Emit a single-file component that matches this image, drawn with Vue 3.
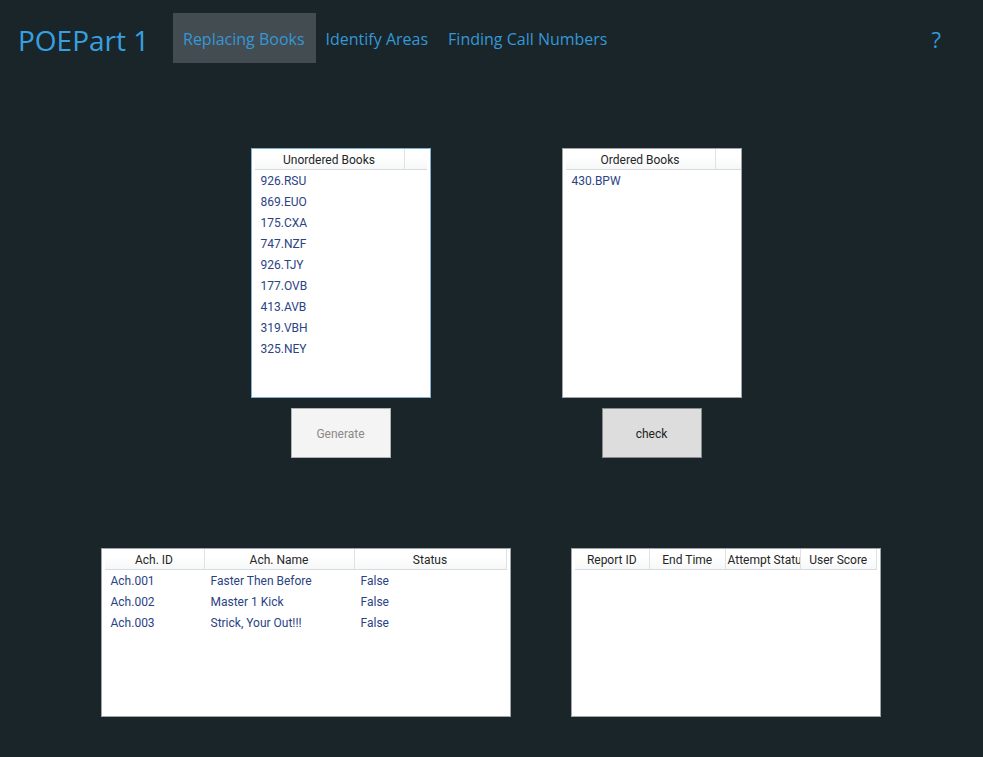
<script setup>
import { ref } from 'vue'

const tabs = ['Replacing Books', 'Identify Areas', 'Finding Call Numbers']
const activeTab = ref(tabs[0])

const unordered = [
  '926.RSU', '869.EUO', '175.CXA', '747.NZF', '926.TJY',
  '177.OVB', '413.AVB', '319.VBH', '325.NEY',
]
const ordered = ['430.BPW']

const achievements = [
  { id: 'Ach.001', name: 'Faster Then Before', status: 'False' },
  { id: 'Ach.002', name: 'Master 1 Kick', status: 'False' },
  { id: 'Ach.003', name: 'Strick, Your Out!!!', status: 'False' },
]
const reportColumns = ['Report ID', 'End Time', 'Attempt Status', 'User Score']
</script>

<template>
  <div class="app">
    <header class="top">
      <h1 class="title">POEPart 1</h1>
      <nav class="tabs">
        <button
          v-for="tab in tabs"
          :key="tab"
          type="button"
          class="tab"
          :class="{ active: tab === activeTab }"
          @click="activeTab = tab"
        >{{ tab }}</button>
      </nav>
      <button type="button" class="help">?</button>
    </header>

    <main>
      <section class="books">
        <div class="stack">
          <div class="panel list focused">
            <table>
              <colgroup><col class="book"><col></colgroup>
              <thead><tr><th>Unordered Books</th><th class="rest"></th></tr></thead>
              <tbody>
                <tr v-for="book in unordered" :key="book"><td>{{ book }}</td><td></td></tr>
              </tbody>
            </table>
          </div>
          <button type="button" class="action" disabled>Generate</button>
        </div>
        <div class="stack">
          <div class="panel list flush">
            <table>
              <colgroup><col class="book"><col></colgroup>
              <thead><tr><th>Ordered Books</th><th class="rest"></th></tr></thead>
              <tbody>
                <tr v-for="book in ordered" :key="book"><td>{{ book }}</td><td></td></tr>
              </tbody>
            </table>
          </div>
          <button type="button" class="action">check</button>
        </div>
      </section>

      <section class="results">
        <div class="panel achievements">
          <table>
            <colgroup><col class="ach-id"><col class="ach-col"><col></colgroup>
            <thead><tr><th>Ach. ID</th><th>Ach. Name</th><th>Status</th></tr></thead>
            <tbody>
              <tr v-for="a in achievements" :key="a.id">
                <td>{{ a.id }}</td><td>{{ a.name }}</td><td>{{ a.status }}</td>
              </tr>
            </tbody>
          </table>
        </div>
        <div class="panel reports">
          <table>
            <thead><tr><th v-for="c in reportColumns" :key="c">{{ c }}</th></tr></thead>
          </table>
        </div>
      </section>
    </main>
  </div>
</template>

<style>
body {
  margin: 0;
  background: #1a2529;
}
</style>

<style scoped>
.app {
  box-sizing: border-box;
  min-height: 100vh;
  background: #1a2529;
  font-family: Roboto, "Open Sans", sans-serif;
  font-size: 12px;
}
button {
  font: inherit;
  cursor: pointer;
}
.top {
  display: flex;
  align-items: center;
  padding: 13px 32px 0 18px;
  color: #37a0e0;
  font-family: "Open Sans", "Noto Sans", sans-serif;
}
.title {
  box-sizing: border-box;
  margin: 0;
  width: 155px;
  height: 50px;
  padding-top: 2px;
  font-size: 28px;
  font-weight: 400;
  line-height: 50px;
  white-space: nowrap;
}
.tabs {
  display: flex;
}
.tab,
.help {
  height: 50px;
  padding: 2px 10px 0;
  border: 0;
  background: transparent;
  color: #3597d8;
  font-size: 16px;
  white-space: nowrap;
}
.tab.active {
  padding: 2px 11px 0 10px;
  background: #434c50;
}
.help {
  margin-left: auto;
  font-size: 22px;
}
.books,
.results {
  display: flex;
  justify-content: center;
}
.books {
  gap: 131px;
  padding: 85px 0 0 9px;
}
.results {
  gap: 60px;
  padding: 90px 2px 40px 0;
}
.stack {
  display: flex;
  flex-direction: column;
  align-items: center;
  gap: 10px;
}
.panel {
  box-sizing: border-box;
  padding: 0 3px;
  border: 1px solid #a0a5aa;
  background: #fff;
}
.list {
  width: 180px;
  height: 250px;
}
.focused {
  border-color: #7fb0cf;
}
.flush {
  padding-right: 0;
}
.achievements {
  width: 410px;
  height: 169px;
}
.reports {
  width: 310px;
  height: 169px;
}
table {
  width: 100%;
  table-layout: fixed;
  border-collapse: separate;
  border-spacing: 0;
}
.book {
  width: 150px;
}
.ach-id {
  width: 100px;
}
.ach-col {
  width: 150px;
}
th,
td {
  box-sizing: border-box;
  height: 21px;
  line-height: 20px;
  overflow: hidden;
  white-space: nowrap;
}
th {
  padding: 2px 2px 0;
  border-right: 1px solid #dfe1e2;
  border-bottom: 1px solid #d8dadb;
  background: linear-gradient(#fff 40%, #f6f7f8);
  color: #262626;
  font-weight: 400;
  line-height: 18px;
  text-align: center;
}
.rest {
  border-right: 0;
}
td {
  padding: 0 6px;
  color: #2b4384;
}
.action {
  width: 100px;
  height: 50px;
  padding: 2px 0 0;
  border: 1px solid #8a8c8e;
  background: #ddd;
  color: #222;
}
.action:disabled {
  border-color: #adb2b5;
  background: #f4f4f4;
  color: #8a8a8a;
  cursor: default;
}
</style>
